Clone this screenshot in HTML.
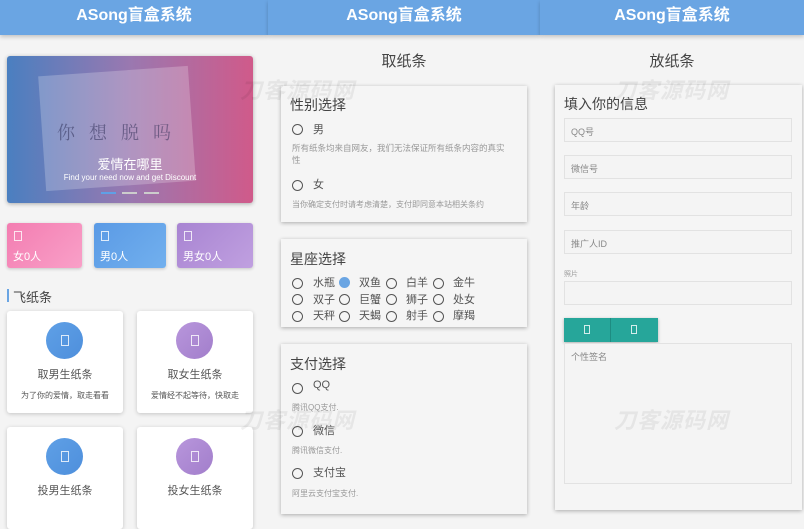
<!DOCTYPE html>
<html><head><meta charset="utf-8"><style>
*{box-sizing:border-box;margin:0;padding:0}
body{width:804px;height:503px;overflow:hidden;background:#f4f4f4;font-family:"Liberation Sans","Noto Sans CJK SC",sans-serif;position:relative;color:#333}
.hdr{position:absolute;top:0;height:35px;background:#6aa5e3;color:#fff;font-weight:bold;font-size:16px;text-align:center;line-height:32px;box-shadow:0 2px 4px rgba(0,0,0,.2)}
.abs{position:absolute}
.card{position:absolute;background:#f5f5f5;box-shadow:0 1px 4px rgba(0,0,0,.3)}
.wm{position:absolute;font-size:22px;font-weight:bold;font-style:italic;color:rgba(0,0,0,.06);letter-spacing:1px}
.rad{position:absolute;width:11px;height:11px;border:1.5px solid #555;border-radius:50%}
.t{position:absolute;font-size:11px;color:#555;white-space:nowrap}
.s{position:absolute;font-size:8px;color:#999;white-space:nowrap}
.inp{position:absolute;left:564px;width:228px;height:24px;border:1px solid #e2e2e2;background:#f4f4f4;font-size:9px;color:#888;padding:6px 6px}
.stat{position:absolute;top:223px;height:45px;border-radius:3px;color:#fff;font-size:11px;box-shadow:0 1px 3px rgba(0,0,0,.2)}
.stat i{position:absolute;left:7px;top:8px;width:8px;height:10px;border:1px solid rgba(255,255,255,.8)}
.stat b{position:absolute;left:6px;top:25px;font-weight:normal}
.fc{position:absolute;width:116px;height:102px;background:#fff;border-radius:3px;box-shadow:0 1px 4px rgba(0,0,0,.2);text-align:center}
.fc .c{position:absolute;left:39px;top:11px;width:37px;height:37px;border-radius:50%}
.fc .c:after{content:"";position:absolute;left:15px;top:13px;width:6px;height:9px;border:1px solid rgba(255,255,255,.8)}
.fc .h{position:absolute;top:55px;width:100%;font-size:11px;color:#555}
.fc .d{position:absolute;top:79px;width:100%;font-size:8px;color:#555}
.blue{background:linear-gradient(135deg,#5fa0e6,#4e8fdc)}
.pur{background:linear-gradient(135deg,#b896dc,#a27ecb)}
</style></head><body>
<div class="hdr" style="left:0;width:268px">ASong盲盒系统</div>
<div class="hdr" style="left:268px;width:272px">ASong盲盒系统</div>
<div class="hdr" style="left:540px;width:264px">ASong盲盒系统</div>

<!-- left -->
<div class="abs" style="left:7px;top:56px;width:246px;height:147px;border-radius:3px;background:linear-gradient(90deg,#4a7fc0,#9a78b0 50%,#d05a8a);box-shadow:0 1px 4px rgba(0,0,0,.3);overflow:hidden">
<div class="abs" style="left:35px;top:15px;width:150px;height:115px;background:rgba(255,255,255,.22);transform:rotate(-4deg)"></div>
<div class="abs" style="left:50px;top:63px;font-size:18px;color:rgba(40,40,80,.5);font-family:'Noto Serif CJK SC',serif;letter-spacing:14px">你想脱吗</div>
<div class="abs" style="width:100%;top:98px;text-align:center;color:#fff;font-size:13px">爱情在哪里</div>
<div class="abs" style="width:100%;top:117px;text-align:center;color:#fff;font-size:8px">Find your need now and get Discount</div>
<div class="abs" style="left:94px;top:136px;width:15px;height:2px;background:#5fa0e6"></div>
<div class="abs" style="left:115px;top:136px;width:15px;height:2px;background:#ccc"></div>
<div class="abs" style="left:137px;top:136px;width:15px;height:2px;background:#ccc"></div>
</div>
<div class="stat" style="left:7px;width:75px;background:linear-gradient(135deg,#f37db1,#f9a0c8)"><i></i><b>女0人</b></div>
<div class="stat" style="left:94px;width:72px;background:linear-gradient(135deg,#5a9ae5,#72b0ee)"><i></i><b>男0人</b></div>
<div class="stat" style="left:177px;width:76px;background:linear-gradient(135deg,#a884d2,#c0a0e0)"><i></i><b>男女0人</b></div>
<div class="abs" style="left:7px;top:289px;width:2px;height:13px;background:#6aa5e3"></div>
<div class="abs" style="left:13px;top:287px;font-size:13px;color:#444">飞纸条</div>
<div class="fc" style="left:7px;top:311px"><div class="c blue"></div><div class="h">取男生纸条</div><div class="d">为了你的爱情，取走看看</div></div>
<div class="fc" style="left:137px;top:311px"><div class="c pur"></div><div class="h">取女生纸条</div><div class="d">爱情经不起等待，快取走</div></div>
<div class="fc" style="left:7px;top:427px"><div class="c blue"></div><div class="h">投男生纸条</div></div>
<div class="fc" style="left:137px;top:427px"><div class="c pur"></div><div class="h">投女生纸条</div></div>

<!-- middle -->
<div class="abs" style="left:268px;width:272px;top:50px;text-align:center;font-size:15px;color:#444">取纸条</div>
<div class="card" style="left:281px;top:86px;width:246px;height:136px"></div>
<div class="abs" style="left:290px;top:95px;font-size:14px;color:#444">性别选择</div>
<div class="rad" style="left:292px;top:124px"></div><div class="t" style="left:313px;top:121px">男</div>
<div class="s" style="left:292px;top:142px;white-space:normal;width:215px;font-size:8.5px;line-height:12px">所有纸条均来自网友，我们无法保证所有纸条内容的真实性</div>
<div class="rad" style="left:292px;top:180px"></div><div class="t" style="left:313px;top:176px">女</div>
<div class="s" style="left:292px;top:199px">当你确定支付时请考虑清楚，支付即同意本站相关条约</div>
<div class="card" style="left:281px;top:239px;width:246px;height:88px"></div>
<div class="abs" style="left:290px;top:249px;font-size:14px;color:#444">星座选择</div>
<div class="rad" style="left:292px;top:278px"></div><div class="t" style="left:313px;top:274px">水瓶</div>
<div class="abs" style="left:339px;top:277px;width:11px;height:11px;border-radius:50%;background:#6aa5e3"></div><div class="t" style="left:359px;top:274px">双鱼</div>
<div class="rad" style="left:386px;top:278px"></div><div class="t" style="left:406px;top:274px">白羊</div>
<div class="rad" style="left:433px;top:278px"></div><div class="t" style="left:453px;top:274px">金牛</div>
<div class="rad" style="left:292px;top:294px"></div><div class="t" style="left:313px;top:291px">双子</div>
<div class="rad" style="left:339px;top:294px"></div><div class="t" style="left:359px;top:291px">巨蟹</div>
<div class="rad" style="left:386px;top:294px"></div><div class="t" style="left:406px;top:291px">狮子</div>
<div class="rad" style="left:433px;top:294px"></div><div class="t" style="left:453px;top:291px">处女</div>
<div class="rad" style="left:292px;top:311px"></div><div class="t" style="left:313px;top:307px">天秤</div>
<div class="rad" style="left:339px;top:311px"></div><div class="t" style="left:359px;top:307px">天蝎</div>
<div class="rad" style="left:386px;top:311px"></div><div class="t" style="left:406px;top:307px">射手</div>
<div class="rad" style="left:433px;top:311px"></div><div class="t" style="left:453px;top:307px">摩羯</div>
<div class="card" style="left:281px;top:344px;width:246px;height:170px"></div>
<div class="abs" style="left:290px;top:354px;font-size:14px;color:#444">支付选择</div>
<div class="rad" style="left:292px;top:383px"></div><div class="t" style="left:313px;top:379px">QQ</div>
<div class="s" style="left:292px;top:402px">腾讯QQ支付.</div>
<div class="rad" style="left:292px;top:426px"></div><div class="t" style="left:313px;top:422px">微信</div>
<div class="s" style="left:292px;top:445px">腾讯微信支付.</div>
<div class="rad" style="left:292px;top:468px"></div><div class="t" style="left:313px;top:464px">支付宝</div>
<div class="s" style="left:292px;top:488px">阿里云支付宝支付.</div>

<!-- right -->
<div class="abs" style="left:540px;width:264px;top:50px;text-align:center;font-size:15px;color:#444">放纸条</div>
<div class="card" style="left:555px;top:85px;width:247px;height:425px"></div>
<div class="abs" style="left:564px;top:94px;font-size:14px;color:#444">填入你的信息</div>
<div class="inp" style="top:118px">QQ号</div>
<div class="inp" style="top:155px">微信号</div>
<div class="inp" style="top:192px">年龄</div>
<div class="inp" style="top:230px">推广人ID</div>
<div class="s" style="left:564px;top:269px;font-size:7px">照片</div>
<div class="inp" style="top:281px"></div>
<div class="abs" style="left:564px;top:318px;width:94px;height:24px;background:#26a69a;box-shadow:0 1px 3px rgba(0,0,0,.3)"></div>
<div class="abs" style="left:610px;top:318px;width:1px;height:24px;background:#1e8c82"></div>
<div class="abs" style="left:584px;top:325px;width:6px;height:9px;border:1px solid rgba(255,255,255,.8)"></div>
<div class="abs" style="left:631px;top:325px;width:6px;height:9px;border:1px solid rgba(255,255,255,.8)"></div>
<div class="inp" style="top:343px;height:141px">个性签名</div>

<div class="wm" style="left:240px;top:73px">刀客源码网</div>
<div class="wm" style="left:614px;top:73px">刀客源码网</div>
<div class="wm" style="left:240px;top:403px">刀客源码网</div>
<div class="wm" style="left:614px;top:403px">刀客源码网</div>
</body></html>
